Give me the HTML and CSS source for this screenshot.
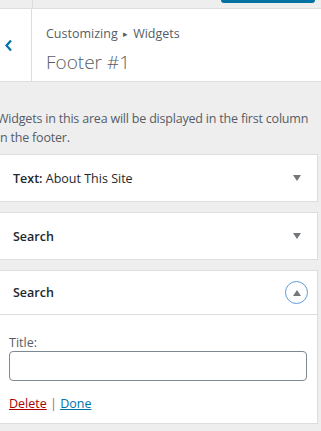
FILE: index.html
```html
<!DOCTYPE html>
<html lang="en">
<head>
    <meta charset="UTF-8">
    <meta name="viewport" content="width=device-width, initial-scale=1.0">
    <title>Customizing Widgets</title>
    <link rel="stylesheet" href="styles.css">
</head>
<body>

    <!-- top bar with publish button -->
    <div class="topbar">
        <div class="topbar-left"></div>
        <div class="publish"></div>
    </div>

    <!-- section header -->
    <div class="section-header">
        <div class="back">
            <svg width="9" height="13" viewBox="0 0 9 13">
                <path d="M7 1.5 L2.5 6.5 L7 11.5" fill="none" stroke="#0073aa" stroke-width="2.2"/>
            </svg>
        </div>
        <div class="title-block">
            <div class="crumb">Customizing <span class="sep">&#9656;</span> Widgets</div>
            <div class="section-title">Footer #1</div>
        </div>
    </div>

    <div class="panel">
        <p class="description">Widgets in this area will be displayed in the first column in the footer.</p>

        <div class="widget">
            <div class="widget-top">
                <div class="widget-title"><strong>Text:</strong> About This Site</div>
                <div class="toggle"><span class="arrow down"></span></div>
            </div>
        </div>

        <div class="widget">
            <div class="widget-top">
                <div class="widget-title"><strong>Search</strong></div>
                <div class="toggle"><span class="arrow down"></span></div>
            </div>
        </div>

        <div class="widget open">
            <div class="widget-top">
                <div class="widget-title"><strong>Search</strong></div>
                <div class="toggle focused"><span class="arrow up"></span></div>
            </div>
            <div class="widget-inside">
                <label class="field-label" for="widget-title">Title:</label>
                <input type="text" id="widget-title" class="field-input">
                <div class="widget-actions">
                    <a href="#" class="delete">Delete</a> <span class="bar">|</span> <a href="#" class="done">Done</a>
                </div>
            </div>
        </div>
    </div>

</body>
</html>
```

FILE: styles.css
```css
body {
    margin: 0;
    font-family: "Open Sans", "Noto Sans", Arial, sans-serif;
    font-size: 13px;
    color: #23282d;
    background-color: #eee;
    overflow: hidden;
}

/* 顶部栏 */
.topbar {
    display: flex;
    height: 8px;
    border-bottom: 1px solid #ddd;
    position: relative;
}
.topbar-left {
    width: 32px;
    border-right: 1px solid #ddd;
}
.publish {
    position: absolute;
    top: -10px;
    left: 221px;
    width: 94px;
    height: 13px;
    background-color: #0071a1;
    border-radius: 3px;
}

/* 区块标题 */
.section-header {
    display: flex;
    height: 72px;
    background-color: #fff;
    border-bottom: 1px solid #ddd;
}
.back {
    width: 32px;
    border-right: 1px solid #ddd;
    display: flex;
    align-items: center;
    padding-left: 4px;
    box-sizing: border-box;
    background-color: #fff;
}
.title-block {
    padding: 15px 0 0 14px;
}
.crumb {
    color: #555d66;
    font-size: 12.5px;
    line-height: 20px;
}
.crumb .sep {
    font-size: 9px;
    vertical-align: 1px;
    margin: 0 2px;
}
.section-title {
    color: #555d66;
    font-size: 19px;
    font-weight: 300;
    line-height: 28px;
    margin-top: 4px;
}

/* 小工具列表 */
.panel {
    margin-left: -1px;
    padding-right: 3px;
}
.description {
    margin: 27px 4px 7px -2px;
    color: #555d66;
    font-size: 12.5px;
    letter-spacing: -0.2px;
    line-height: 19px;
}
.widget {
    background-color: #fff;
    border: 1px solid #ddd;
    margin-bottom: 10px;
}
.widget-top {
    display: flex;
    align-items: center;
    height: 46px;
}
.widget.open .widget-top {
    height: 43px;
    border-bottom: 1px solid #ddd;
}
.widget-title {
    flex-grow: 1;
    padding-left: 13px;
    font-size: 12.5px;
}
.widget-title strong {
    font-weight: 600;
}
.toggle {
    width: 23px;
    height: 23px;
    margin-right: 9px;
    border-radius: 50%;
    display: flex;
    justify-content: center;
    align-items: center;
    box-sizing: border-box;
}
.toggle.focused {
    border: 1.5px solid #5b9dd9;
}
.arrow {
    width: 0;
    height: 0;
    border-left: 4.5px solid transparent;
    border-right: 4.5px solid transparent;
}
.arrow.down {
    border-top: 6px solid #72777c;
}
.arrow.up {
    border-bottom: 6px solid #72777c;
}

/* 展开内容 */
.widget-inside {
    padding: 20px 10px 9px 9px;
}
.field-label {
    display: block;
    color: #555d66;
    font-size: 12.5px;
    line-height: 16px;
}
.field-input {
    display: block;
    width: 100%;
    height: 30px;
    margin: 0;
    box-sizing: border-box;
    border: 1px solid #7e8993;
    border-radius: 4px;
    font-family: inherit;
}
.widget-actions {
    margin-top: 13px;
    font-size: 12.5px;
    line-height: 20px;
}
.widget-actions a {
    text-decoration: underline;
}
.delete {
    color: #a00;
}
.done {
    color: #0073aa;
}
.bar {
    color: #72777c;
}
```
